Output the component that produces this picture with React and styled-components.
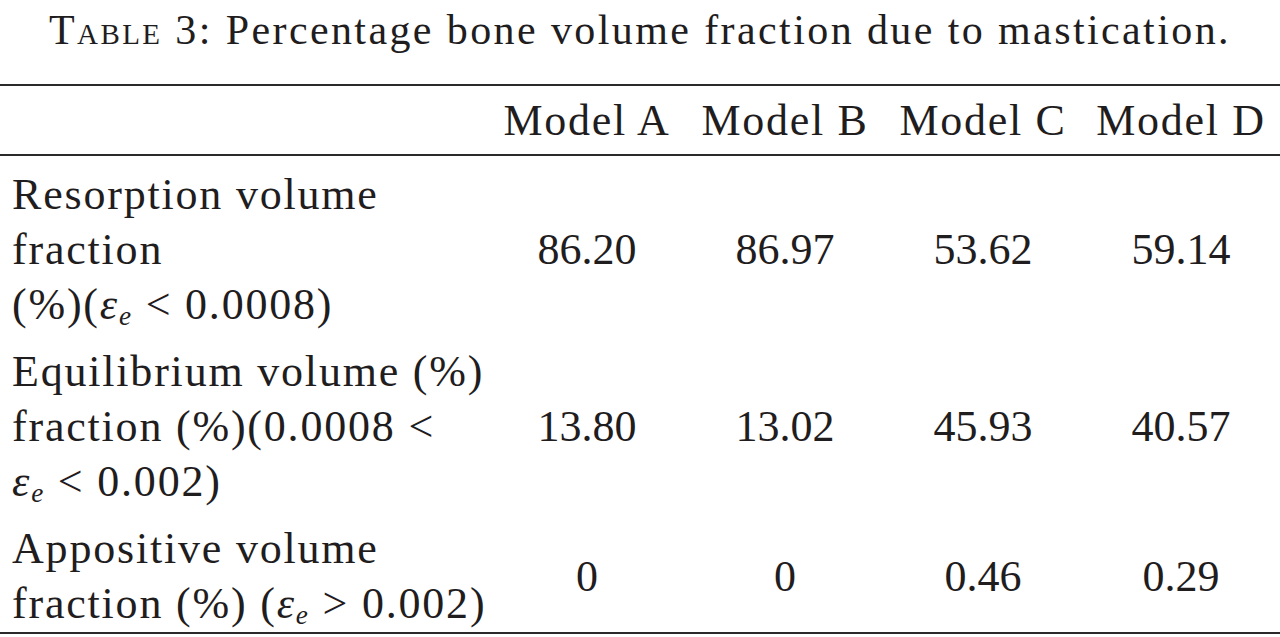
import React from "react";
import styled, { createGlobalStyle } from "styled-components";

const GlobalStyle = createGlobalStyle`
  html, body {
    margin: 0;
    padding: 0;
    background: #ffffff;
  }
  body {
    font-family: "Liberation Serif", "DejaVu Serif", serif;
    color: #1f1d1e;
  }
`;

const rows = [
  {
    label: [
      "Resorption volume",
      "fraction",
      <>
        (%)(<Eps /> &lt; 0.0008)
      </>,
    ],
    values: ["86.20", "86.97", "53.62", "59.14"],
  },
  {
    label: [
      "Equilibrium volume (%)",
      "fraction (%)(0.0008 <",
      <>
        <Eps /> &lt; 0.002)
      </>,
    ],
    values: ["13.80", "13.02", "45.93", "40.57"],
  },
  {
    label: [
      "Appositive volume",
      <>
        fraction (%) (<Eps /> &gt; 0.002)
      </>,
    ],
    values: ["0", "0", "0.46", "0.29"],
  },
];

const models = ["Model A", "Model B", "Model C", "Model D"];

function Eps() {
  return (
    <EpsWrap>
      <i>ε</i>
      <Sub>e</Sub>
    </EpsWrap>
  );
}

const App = () => {
  return (
    <Page>
      <GlobalStyle />
      <Caption>
        <SmallCaps>Table</SmallCaps> 3: Percentage bone volume fraction due to
        mastication.
      </Caption>
      <Table>
        <HeadRow>
          <HeadCell />
          {models.map((m) => (
            <HeadCell key={m} $center>
              {m}
            </HeadCell>
          ))}
        </HeadRow>
        {rows.map((row, i) => (
          <BodyRow key={i} $last={i === rows.length - 1}>
            <Label>
              {row.label.map((line, j) => (
                <Line key={j}>{line}</Line>
              ))}
            </Label>
            {row.values.map((v, j) => (
              <Value key={j}>{v}</Value>
            ))}
          </BodyRow>
        ))}
      </Table>
    </Page>
  );
};

const Page = styled.div`
  width: 1280px;
  height: 637px;
  overflow: hidden;
  display: flex;
  flex-direction: column;
`;

const Caption = styled.div`
  height: 84px;
  box-sizing: border-box;
  padding-top: 6px;
  text-align: center;
  font-size: 42px;
  line-height: 48px;
  letter-spacing: 2.4px;
  white-space: nowrap;
`;

const SmallCaps = styled.span`
  font-variant: small-caps;
`;

const Table = styled.div`
  display: flex;
  flex-direction: column;
  border-top: 2px solid #2a2a2a;
`;

const HeadRow = styled.div`
  display: grid;
  grid-template-columns: 488px repeat(4, 198px);
  height: 68px;
  align-items: center;
  border-bottom: 2px solid #2a2a2a;
`;

const HeadCell = styled.div`
  font-size: 44px;
  letter-spacing: 1.7px;
  text-align: ${(p) => (p.$center ? "center" : "left")};
  white-space: nowrap;
`;

const BodyRow = styled.div`
  display: grid;
  grid-template-columns: 488px repeat(4, 198px);
  align-items: center;
  padding: 11px 0 1px;
  border-bottom: ${(p) => (p.$last ? "2px solid #2a2a2a" : "none")};
`;

const Label = styled.div`
  padding-left: 12px;
  font-size: 44px;
  line-height: 55px;
  letter-spacing: 1.8px;
`;

const Line = styled.div`
  white-space: nowrap;
`;

const Value = styled.div`
  font-size: 44px;
  text-align: center;
`;

const EpsWrap = styled.span`
  font-style: normal;
  i {
    font-style: italic;
  }
`;

const Sub = styled.sub`
  font-style: italic;
  font-size: 0.62em;
  vertical-align: -0.22em;
  line-height: 0;
`;

export default App;
